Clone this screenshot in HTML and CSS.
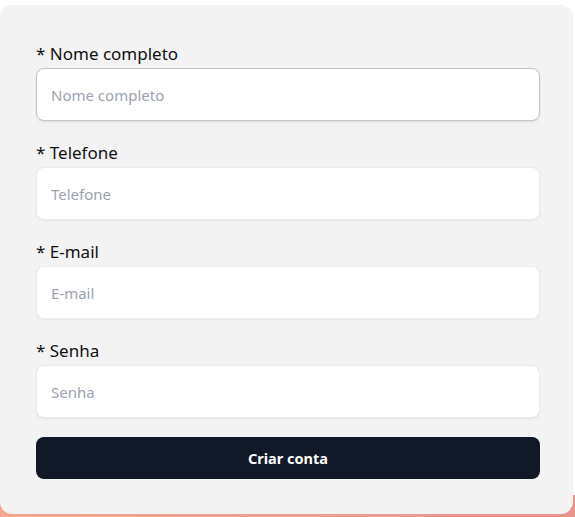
FILE: index.html
```html
<!DOCTYPE html>
<html lang="pt">
<head>
<meta charset="utf-8">
<title>Criar conta</title>
<link rel="stylesheet" href="styles.css">
</head>
<body>
  <form class="card">
    <div class="field">
      <label class="label" for="nome">* Nome completo</label>
      <input class="input input-focus" id="nome" type="text" placeholder="Nome completo">
    </div>
    <div class="field">
      <label class="label" for="tel">* Telefone</label>
      <input class="input" id="tel" type="text" placeholder="Telefone">
    </div>
    <div class="field">
      <label class="label" for="email">* E-mail</label>
      <input class="input" id="email" type="text" placeholder="E-mail">
    </div>
    <div class="field">
      <label class="label" for="senha">* Senha</label>
      <input class="input" id="senha" type="password" placeholder="Senha">
    </div>
    <button class="button" type="button">Criar conta</button>
  </form>
</body>
</html>
```

FILE: styles.css
```css
html, body {
  margin: 0;
  padding: 0;
  height: 517px;
  overflow: hidden;
}
body {
  font-family: "Noto Sans", "Open Sans", sans-serif;
  background:
    linear-gradient(to right, #f1a88f, #e8948e) 0 495px / 100% 22px no-repeat,
    #ffffff;
  padding-top: 5px;
  box-sizing: border-box;
}
.card {
  width: 573px;
  height: 509px;
  box-sizing: border-box;
  background: #f3f3f3;
  border-radius: 12px;
  padding: 37px 33px 0 36px;
  display: flex;
  flex-direction: column;
}
.field {
  display: flex;
  flex-direction: column;
  gap: 2px;
  margin-bottom: 20px;
}
.field:last-of-type {
  margin-bottom: 19px;
}
.label {
  font-size: 17px;
  line-height: 24px;
  color: #111111;
}
.input {
  height: 53px;
  box-sizing: border-box;
  border: 1px solid #ebebeb;
  border-radius: 8px;
  background: #ffffff;
  box-shadow: 0 1px 2px rgba(0, 0, 0, 0.06);
  padding: 0 14px;
  font-family: inherit;
  font-size: 15px;
  color: #111;
  outline: none;
}
.input::placeholder {
  color: #9ca3af;
}
.input-focus {
  border-color: #c0c4cb;
  box-shadow: 0 1px 2px rgba(0, 0, 0, 0.1);
}
.button {
  height: 42px;
  border: none;
  border-radius: 8px;
  background: #111827;
  color: #ffffff;
  font-family: inherit;
  font-size: 14.5px;
  font-weight: 700;
  cursor: pointer;
}
```
